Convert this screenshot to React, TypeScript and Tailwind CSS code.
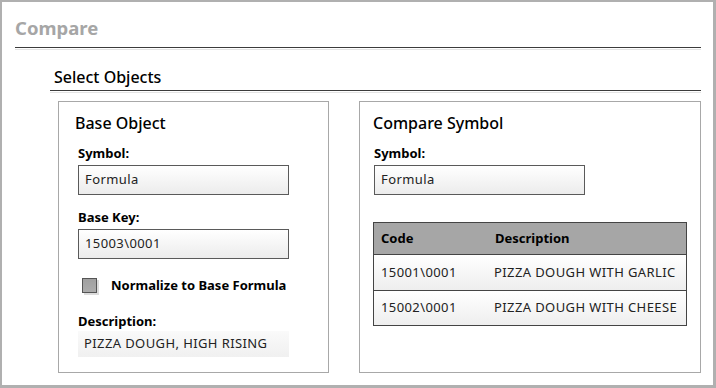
import {FC} from "react";

const font = {fontFamily: '"Segoe UI", "Noto Sans", "Open Sans", sans-serif'};

interface FieldProps {
    label: string;
    value: string;
}

const Field: FC<FieldProps> = ({label, value}) => (
    <div className="flex flex-col">
        <div className="text-[13px] font-bold text-black leading-[16px] h-[16px]">{label}</div>
        <div
            className="mt-[4px] w-[211px] h-[30px] border border-[#5a5a5a] bg-gradient-to-b from-white to-[#ececec] flex items-center pl-[6px] text-[13px] text-[#222] tracking-[0.4px]">
            {value}
        </div>
    </div>
);

const rows = [
    {code: "15001\\0001", description: "PIZZA DOUGH WITH GARLIC"},
    {code: "15002\\0001", description: "PIZZA DOUGH WITH CHEESE"},
];

export default function App() {
    return (
        <div style={font}
             className="w-[716px] h-[388px] bg-white border-l-2 border-t-2 border-r-[3px] border-b-[3px] border-[#b0b0b0] flex flex-col">

            {/* Page title */}
            <div className="ml-[13px] mr-[12px] mt-[14px]">
                <div className="text-[18.5px] font-bold text-[#a6a6a6] leading-[24px] h-[31px]">Compare</div>
                <div className="h-px bg-[#3c3c3c]"/>
                <div className="mt-px h-px bg-[#e4e4e4]"/>
            </div>

            {/* Section */}
            <div className="ml-[48px] mr-[12px] mt-[17px]">
                <div className="pl-[4px] text-[16px] font-medium text-black leading-[20px] h-[23px]">Select Objects</div>
                <div className="h-px bg-[#3c3c3c]"/>
                <div className="mt-px h-px bg-[#e4e4e4]"/>
            </div>

            <div className="flex ml-[56px] mt-[8px] gap-[30px]">
                {/* Base Object */}
                <div className="w-[271px] h-[272px] border border-[#a8a8a8] flex flex-col pl-[19px] pt-[11px]">
                    <div className="-ml-[3px] text-[16px] font-medium text-black leading-[20px] h-[20px]">Base Object</div>
                    <div className="mt-[12px]">
                        <Field label="Symbol:" value="Formula"/>
                    </div>
                    <div className="mt-[14px]">
                        <Field label="Base Key:" value="15003\0001"/>
                    </div>
                    <div className="mt-[19px] flex items-center h-[15px]">
                        <div className="ml-[4px] w-[15px] h-[15px] border border-[#555] bg-gradient-to-b from-[#a0a0a0] to-[#acacac] shadow-[2px_2px_0_#dcdcdc]"/>
                        <div className="ml-[14px] text-[13px] font-bold text-black">Normalize to Base Formula</div>
                    </div>
                    <div className="mt-[20px] text-[13px] font-bold text-black leading-[16px] h-[16px]">Description:</div>
                    <div className="mt-[2px] w-[211px] h-[26px] bg-gradient-to-b from-[#fafafa] to-[#f0f0f0] flex items-center pl-[6px] text-[13px] text-[#222] tracking-[0.4px]">
                        PIZZA DOUGH, HIGH RISING
                    </div>
                </div>

                {/* Compare Symbol */}
                <div className="w-[342px] h-[272px] border border-[#a8a8a8] flex flex-col pl-[14px] pt-[11px]">
                    <div className="-ml-[1px] text-[16px] font-medium text-black leading-[20px] h-[20px]">Compare Symbol</div>
                    <div className="mt-[12px]">
                        <Field label="Symbol:" value="Formula"/>
                    </div>
                    <div className="mt-[27px] -ml-px w-[314px] border border-[#444] flex flex-col">
                        <div className="h-[32px] bg-[#a6a6a6] flex items-center text-[13px] font-bold text-black border-b border-[#444]">
                            <div className="w-[121px] pl-[7px]">Code</div>
                            <div>Description</div>
                        </div>
                        {rows.map((row, index) => (
                            <div key={index}
                                 className={`bg-gradient-to-b from-white to-[#eeeeee] flex items-center text-[13px] text-[#222] tracking-[0.4px] ${index === 0 ? 'h-[36px] border-b border-[#444]' : 'h-[34px]'}`}>
                                <div className="w-[120px] pl-[7px]">{row.code}</div>
                                <div>{row.description}</div>
                            </div>
                        ))}
                    </div>
                </div>
            </div>
        </div>
    );
}
